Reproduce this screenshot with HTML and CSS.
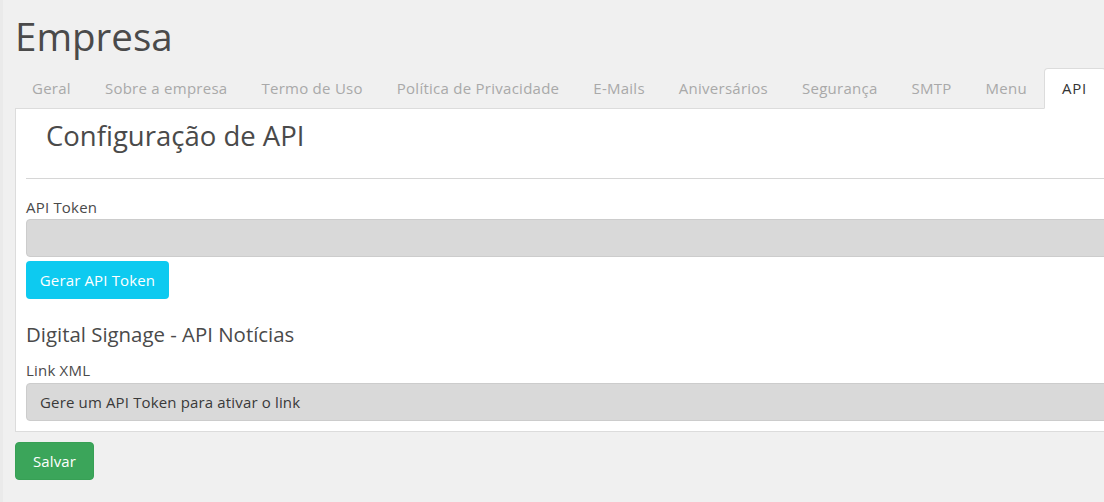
FILE: index.html
```html
<!DOCTYPE html>
<html lang="pt-BR">
<head>
<meta charset="utf-8">
<title>Empresa</title>
<link rel="stylesheet" href="styles.css">
</head>
<body>
<div class="page">
  <h1 class="title">Empresa</h1>
  <ul class="tabs">
    <li class="tab">Geral</li>
    <li class="tab">Sobre a empresa</li>
    <li class="tab">Termo de Uso</li>
    <li class="tab">Política de Privacidade</li>
    <li class="tab">E-Mails</li>
    <li class="tab">Aniversários</li>
    <li class="tab">Segurança</li>
    <li class="tab">SMTP</li>
    <li class="tab">Menu</li>
    <li class="tab active">API</li>
  </ul>
  <div class="panel">
    <h3 class="panel-title">Configuração de API</h3>
    <hr class="divider">
    <label class="label">API Token</label>
    <div class="input"></div>
    <button class="btn btn-info">Gerar API Token</button>
    <h4 class="section-title">Digital Signage - API Notícias</h4>
    <label class="label">Link XML</label>
    <div class="input">Gere um API Token para ativar o link</div>
  </div>
  <button class="btn btn-success">Salvar</button>
</div>
</body>
</html>
```

FILE: styles.css
```css
html, body {
  margin: 0;
  padding: 0;
  overflow: hidden;
}
body {
  background: #f0f0f0;
  font-family: "Open Sans", "Noto Sans", sans-serif;
  font-size: 15px;
  line-height: 1.5;
  color: #4a4a4a;
  width: 1104px;
  height: 502px;
  border-left: 3px solid #eaeaea;
  box-sizing: border-box;
}
.page {
  padding: 0 0 0 12px;
  width: 1200px;
}
.title {
  margin: 0;
  padding-top: 12px;
  font-size: 38.5px;
  font-weight: 400;
  line-height: 48px;
  color: #4a4a4a;
  height: 56px;
}
.tabs {
  list-style: none;
  margin: 0;
  padding: 0;
  display: flex;
  border-bottom: 1px solid #dcdcdc;
}
.tab {
  padding: 8px 16px;
  border: 1px solid transparent;
  border-top-left-radius: 4px;
  border-top-right-radius: 4px;
  margin-bottom: -1px;
  color: #a9a9a9;
  line-height: 22.5px;
  letter-spacing: 0.26px;
}
.tab.active {
  background: #fff;
  color: #333;
  border-color: #dcdcdc #dcdcdc #fff;
  padding: 8px 18px 8px 17px;
  letter-spacing: 0.8px;
}
.panel {
  background: #fff;
  border: 1px solid #dcdcdc;
  border-top: none;
  padding: 10px;
}
.panel-title {
  margin: 0;
  padding-left: 20px;
  font-size: 27.5px;
  font-weight: 400;
  line-height: 34px;
  color: #4a4a4a;
}
.divider {
  border: none;
  border-top: 1px solid #d6d6d6;
  margin: 25px 0 17px;
}
.label {
  display: block;
  line-height: 22.5px;
  color: #4a4a4a;
  margin: 1px 0 1px;
  letter-spacing: 0.2px;
}
.input {
  height: 38px;
  box-sizing: border-box;
  background: #d9d9d9;
  border: 1px solid #cccccc;
  border-radius: 4px;
  padding: 6px 13px;
  line-height: 24px;
  color: #3a3a3a;
  letter-spacing: 0.15px;
}
.btn {
  display: block;
  font-family: inherit;
  font-size: 15px;
  line-height: 22px;
  height: 38px;
  border: 1px solid transparent;
  border-radius: 4px;
  color: #fff;
  padding: 7px 12px;
  cursor: pointer;
  letter-spacing: 0.15px;
}
.btn-info {
  background: #0dcaf0;
  margin-top: 4px;
  width: 143px;
}
.btn-success {
  background: #3ba55a;
  border-color: #37a055;
  margin-top: 10px;
  width: 79px;
}
.section-title {
  margin: 23px 0 13px;
  font-size: 20.4px;
  font-weight: 400;
  line-height: 24px;
  color: #4a4a4a;
}
```
